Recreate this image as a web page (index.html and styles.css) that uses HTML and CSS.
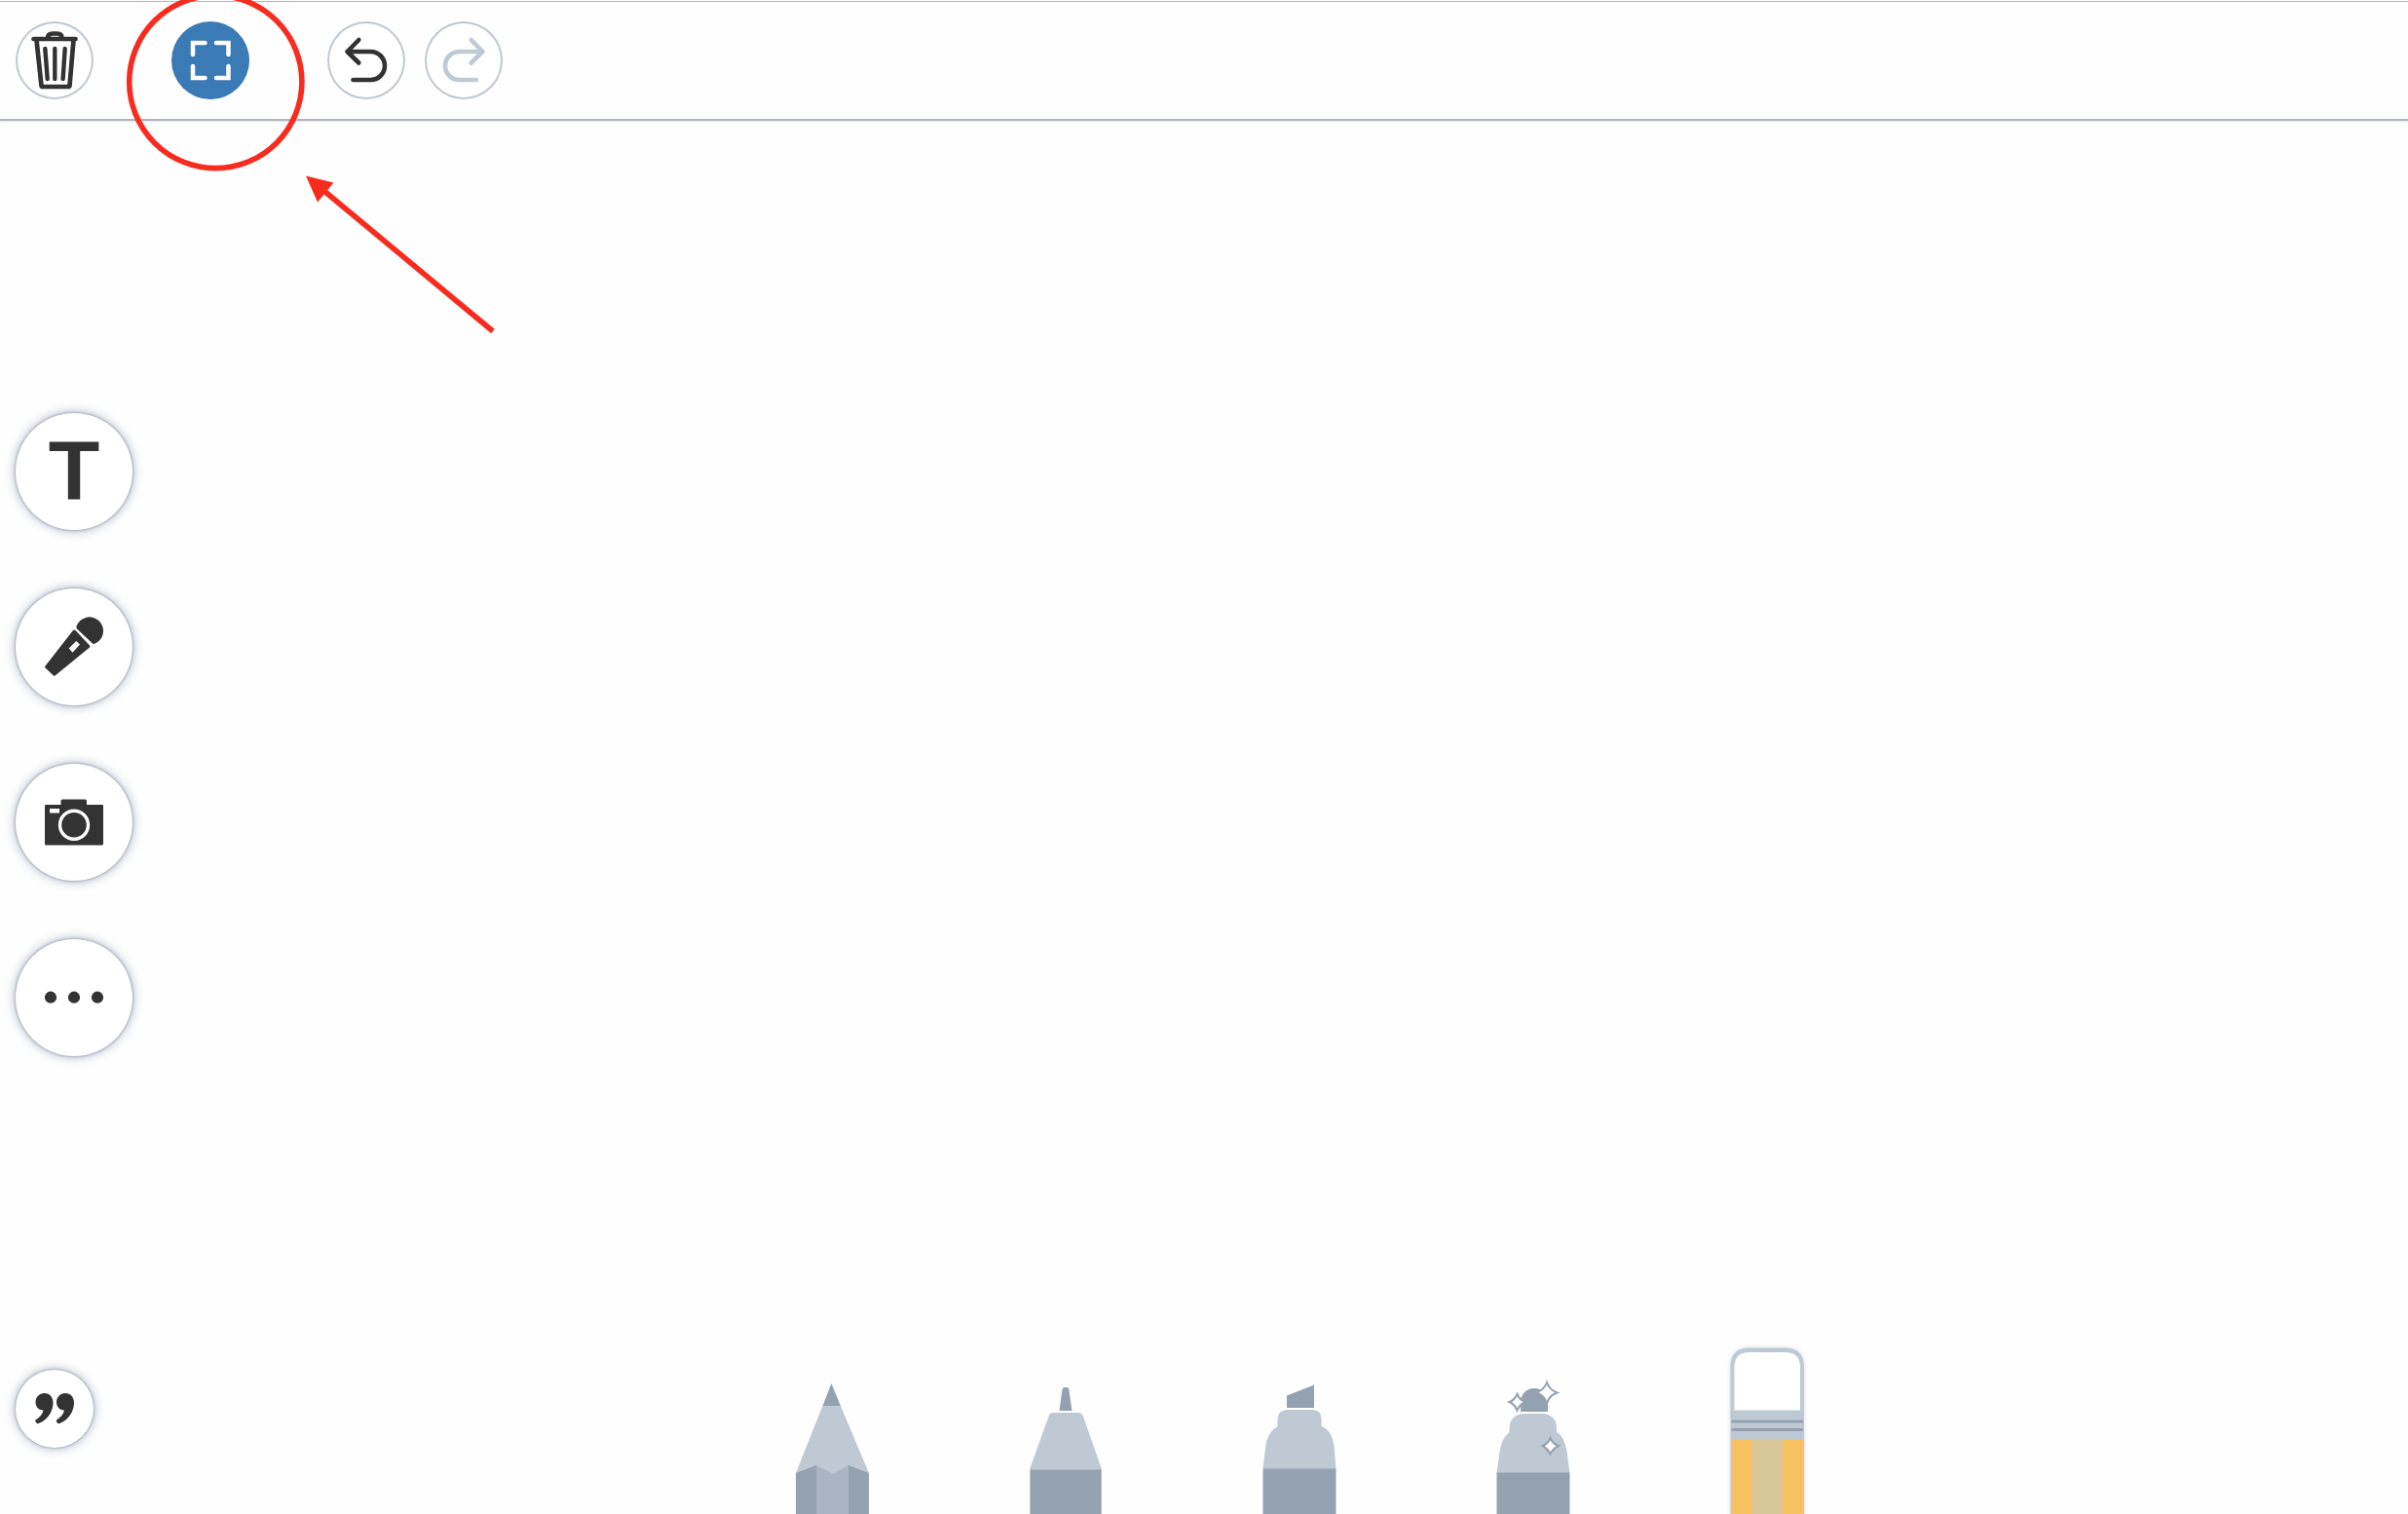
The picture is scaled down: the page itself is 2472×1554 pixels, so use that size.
FILE: index.html
```html
<!DOCTYPE html>
<html lang="en">
<head>
<meta charset="utf-8">
<title>Drawing canvas</title>
<link rel="stylesheet" href="styles.css">
</head>
<body>
<header class="toolbar">
  <button class="round-button" type="button" aria-label="Clear">
    <svg class="icon line" viewBox="0 0 80 80">
      <path stroke-width="4.700" d="M18.500 18H61.500M21.500 19L26.500 66Q26.600 67 28 67H54Q55.400 67 55.500 66L59.500 19M33 17Q33 12.500 38 12.500H43Q47.500 12.500 47.500 17"/>
      <path stroke-width="4.400" d="M30.300 28L32.700 59M40.300 28V59M50.700 28L48.600 59"/>
    </svg>
  </button>
  <button class="round-button active" type="button" aria-label="Full screen">
    <svg class="icon corners" viewBox="0 0 80 80">
      <path stroke-width="4.500" d="M22 34V22H34.500M46 22H58.500V34M58.500 46V58H46M34.500 58H22V46"/>
    </svg>
  </button>
  <div class="history">
    <button class="round-button" type="button" aria-label="Undo">
      <svg class="icon line" viewBox="0 0 80 80">
        <path stroke-width="4.600" d="M32.300 19L20.500 31L32.300 42.500M20.500 31H44.500A14.500 14.500 0 0 1 44.500 60H26.500"/>
      </svg>
    </button>
    <button class="round-button muted" type="button" aria-label="Redo">
      <svg class="icon line" viewBox="0 0 80 80">
        <path stroke-width="4.600" d="M47.700 19L59.500 31L47.700 42.500M59.500 31H35.500A14.500 14.500 0 0 0 35.500 60H53"/>
      </svg>
    </button>
  </div>
</header>

<main class="canvas">
  <nav class="rail" aria-label="Insert">
    <button class="float-button text-button" type="button">T</button>
    <button class="float-button" type="button" aria-label="Record audio">
      <svg class="icon solid" viewBox="0 0 120 120">
        <path d="M63 41.500Q62 40.500 62.600 38.500A14.200 14.200 0 1 1 81 56.800Q80 57.300 79 56.500Z"/>
        <path fill-rule="evenodd" d="M59 43Q60.300 42 61.500 43L76 58.500Q77 59.700 76 60.600L40.500 89.500Q39.500 90 38.700 89.200L30.300 81.300Q29.800 80.700 30.200 80ZM62.300 54L54.700 61.500L58.500 65.700L66 57.500Z"/>
      </svg>
    </button>
    <button class="float-button" type="button" aria-label="Add photo">
      <svg class="icon solid" viewBox="0 0 120 120">
        <path d="M31 42H46.500V38Q46.500 36.500 48 36.500H71.500Q73 36.500 73 38V42H89Q90 42 90 43V82Q90 83.500 88.500 83.500H31.500Q30 83.500 30 82V43Q30 42 31 42Z"/>
        <path class="white" d="M35 46H45V50.500H35Z"/>
        <circle class="lens" cx="60" cy="62.700" r="14.500" stroke-width="3.400"/>
      </svg>
    </button>
    <button class="float-button" type="button" aria-label="More">
      <svg class="icon solid" viewBox="0 0 120 120">
        <circle cx="36" cy="59.700" r="6.100"/><circle cx="60" cy="59.700" r="6.100"/><circle cx="84" cy="59.700" r="6.100"/>
      </svg>
    </button>
  </nav>

  <footer class="dock">
    <button class="float-button small" type="button" aria-label="Instructions">
      <svg class="icon solid" viewBox="0 0 80 80">
        <path d="M29.500 24C35 24 38.500 28 38.500 34C38.500 42 33 52 23 55.200Q22 55.500 21.300 54.300L20.300 53Q19.800 52 21 51.300C25 48.500 28 45 28.500 41.500C24 41.500 20.500 38 20.500 33C20.500 28 24.500 24 29.500 24Z"/>
        <path d="M51 24C56.500 24 60 28 60 34C60 42 54.500 52 44.500 55.200Q43.500 55.500 42.800 54.300L41.800 53Q41.300 52 42.500 51.300C46.500 48.500 49.500 45 50 41.500C45.500 41.500 42 38 42 33C42 28 46 24 51 24Z"/>
      </svg>
    </button>
    <div class="tools">
      <button class="tool" type="button" aria-label="Pencil">
        <svg class="tool-art" viewBox="0 0 80 170">
          <path class="light" d="M30.500 59H49L78 128V132H3V128Z"/>
          <path class="dark" d="M39.500 36L49 59H30.500ZM3 128L24 120V170H3ZM57 120L78 128V170H57Z"/>
          <path class="mid" d="M24 120L41 129L57 120V170H24Z"/>
        </svg>
      </button>
      <button class="tool" type="button" aria-label="Pen">
        <svg class="tool-art" viewBox="0 0 80 170">
          <path class="dark" d="M36.500 42Q37 40 39 40H41Q43 40 43.300 42L46.500 64H33.500Z"/>
          <path class="light" d="M23 68.500Q24 66 26.500 66H54Q56.500 66 57.500 68.500L77 124V170H3V124Z"/>
          <path class="dark" d="M4 124.500H76.500V170H4Z"/>
        </svg>
      </button>
      <button class="tool" type="button" aria-label="Marker">
        <svg class="tool-art" viewBox="0 0 80 170">
          <path class="dark" d="M27 48.500L55 37.500V61H27Z"/>
          <path class="light" d="M27 63H54Q62.500 64 62.500 72V79.500Q74 85 75.500 100L77.500 124H2.500L5 102Q7 86 17.500 80V72Q18 64 27 63Z"/>
          <path class="dark" d="M2.500 123.500H77.500V170H2.500Z"/>
        </svg>
      </button>
      <button class="tool" type="button" aria-label="Glitter">
        <svg class="tool-art" viewBox="0 0 80 170">
          <path class="dark" d="M27 65V55A14 14 0 0 1 55 55V65Z"/>
          <path class="light" d="M29 67H51Q64 69 64 82V86Q72 90 74.500 106L77.500 128H2.500L5.500 106Q7 93 15.500 86V82Q16 69 29 67Z"/>
          <path class="dark" d="M2.500 127.500H77.500V170H2.500Z"/>
          <path class="spark" d="M23.500 47Q26 53 32 55Q26 57.500 23.500 63.500Q21 57.500 15.500 55Q21 53 23.500 47ZM54 35Q56.500 42.500 64.500 45.500Q56.500 48 54 56.500Q51 48 43.500 45.500Q51 42.500 54 35ZM57.500 92Q60 98 66 100Q60 103 57.500 108.500Q55 103 49.500 100Q55 98 57.500 92Z"/>
        </svg>
      </button>
      <button class="tool" type="button" aria-label="Eraser">
        <svg class="tool-art" viewBox="0 0 80 170">
          <path class="light glow" d="M2.500 172V19Q2.500 -0.500 22 -0.500H58Q78 -0.500 78 19V172Z"/>
          <path class="white" d="M6.500 63.500V19Q6.500 4 22 4H58Q74 4 74 19V63.500Z"/>
          <path class="dark" d="M3.500 73.500H77V76.500H3.500ZM3.500 82H77V85H3.500Z"/>
          <path class="wood" d="M3.500 93.500H77V170H3.500Z"/>
          <path class="stripe" d="M24.500 93.500H56V170H24.500Z"/>
        </svg>
      </button>
    </div>
  </footer>
</main>

<svg class="annotation" viewBox="0 0 520 350" aria-hidden="true">
  <circle cx="221.300" cy="84" r="88.600" stroke-width="5.600"/>
  <path stroke-width="5.600" d="M334 197L506 340"/>
  <path class="arrow-head" d="M314 180.500L342.500 187.500L326 207.500Z"/>
</svg>
</body>
</html>
```

FILE: styles.css
```css
* {
  box-sizing: border-box;
}

body {
  display: flex;
  flex-direction: column;
  min-height: 100vh;
  margin: 0;
  padding-top: 1px;
  overflow: hidden;
  background: #fefefe;
  color: #333;
  font-family: "Liberation Sans", Arial, sans-serif;
}

button {
  padding: 0;
  border: 0;
  background: none;
  color: inherit;
  font: inherit;
  cursor: pointer;
}

.toolbar {
  display: flex;
  gap: 80px;
  padding: 20px 16px;
  border-top: 1px solid #b4b7b9;
  border-bottom: 2px solid #b0b4b8;
  background: #fefefe;
  box-shadow: 0 1px 2px #dfe2e6;
}

.history {
  display: flex;
  gap: 20px;
}

.round-button {
  width: 80px;
  height: 80px;
  border-radius: 50%;
  background: #fff;
  box-shadow: inset 0 0 0 2px #c0c8d2;
}

.round-button.active {
  background: #3a7ab5;
  box-shadow: none;
}

.round-button.muted {
  color: #c0cad4;
}

.icon {
  display: block;
  width: 100%;
  height: 100%;
}

.line {
  fill: none;
  stroke: currentColor;
  stroke-linecap: round;
  stroke-linejoin: round;
}

.corners {
  fill: none;
  stroke: #fff;
  stroke-linecap: round;
}

.solid {
  fill: currentColor;
}

.white {
  fill: #fff;
}

.lens {
  fill: none;
  stroke: #fff;
}

.canvas {
  display: flex;
  flex: 1;
  flex-direction: column;
}

.rail {
  display: flex;
  flex: 1;
  flex-direction: column;
  justify-content: center;
  gap: 60px;
  padding: 0 16px;
}

.float-button {
  flex: none;
  width: 120px;
  height: 120px;
  border-radius: 50%;
  background: #fff;
  box-shadow: 0 0 3px #858c9a, 0 0 12px #a3adbf;
}

.float-button.small {
  width: 80px;
  height: 80px;
}

.text-button {
  padding-bottom: 4px;
  font-size: 86px;
  font-weight: bold;
  line-height: 116px;
}

.dock {
  display: grid;
  grid-template-columns: 80px 1fr;
  column-gap: 100px;
  align-items: center;
  height: 170px;
  padding-left: 16px;
}

.dock > .small {
  align-self: start;
  margin-top: 22px;
}

.tools {
  display: flex;
  justify-content: center;
  gap: 160px;
}

.tool,
.tool-art {
  display: block;
  width: 80px;
  height: 170px;
  overflow: visible;
}

.light {
  fill: #bfc9d4;
}

.mid {
  fill: #a9b5c3;
}

.dark {
  fill: #94a1b1;
}

.glow {
  filter: drop-shadow(0 0 2px #d5dae1);
}

.wood {
  fill: #f8c262;
}

.stripe {
  fill: #d9c699;
}

.spark {
  fill: #fff;
  stroke: #94a1b1;
  stroke-width: 2;
}

.annotation {
  position: absolute;
  top: 0;
  left: 0;
  width: 520px;
  height: 350px;
  fill: none;
  stroke: #f72c1f;
  pointer-events: none;
}

.arrow-head {
  fill: #f72c1f;
  stroke: none;
}
```
